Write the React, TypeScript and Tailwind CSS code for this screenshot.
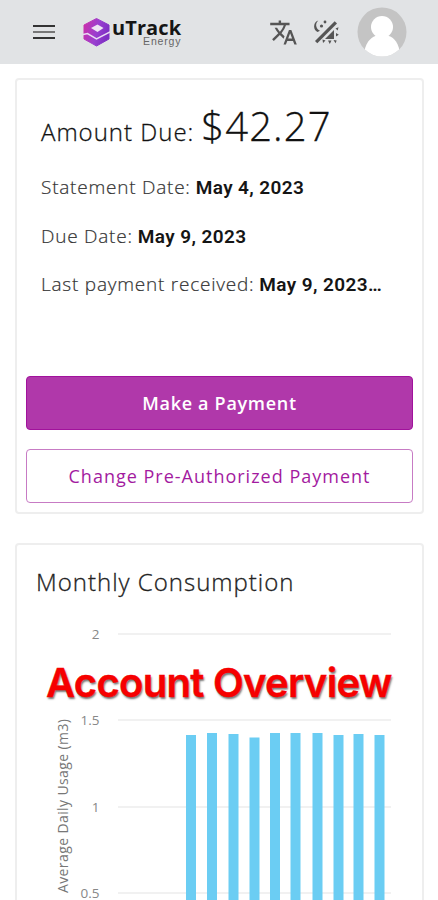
import React from 'react';
import { MdTranslate } from 'react-icons/md';

const details = [
  { label: 'Statement Date:', value: 'May 4, 2023' },
  { label: 'Due Date:', value: 'May 9, 2023' },
  { label: 'Last payment received:', value: 'May 9, 2023…' },
];

const ticks = [
  { label: '2', y: 34 },
  { label: '1.5', y: 120 },
  { label: '1', y: 207 },
  { label: '0.5', y: 293 },
];

const bars = [
  { x: 170.5, top: 135 },
  { x: 191.5, top: 133 },
  { x: 213, top: 134 },
  { x: 234, top: 137.5 },
  { x: 254.5, top: 133 },
  { x: 275, top: 133 },
  { x: 297, top: 133 },
  { x: 318, top: 135 },
  { x: 338, top: 134 },
  { x: 359, top: 135 },
];

function Logo() {
  return (
    <div className="flex items-center ml-[28px]">
      <svg width="27" height="30" viewBox="0 0 27 30">
        <defs>
          <linearGradient id="logo" x1="0" y1="0" x2="1" y2="0.3">
            <stop offset="0" stopColor="#cf2fa8" />
            <stop offset="0.6" stopColor="#9a3fd0" />
            <stop offset="1" stopColor="#7f2fc4" />
          </linearGradient>
        </defs>
        <path
          d="M13.500 1.500 26 8v14l-12.500 7L1 22V8Z"
          fill="url(#logo)"
          stroke="url(#logo)"
          strokeWidth="1"
          strokeLinejoin="round"
        />
        <path d="M8 11 14.500 7.500 20.500 11l-6 4Z" fill="#eee4f4" />
        <path d="M0 17.500 4.500 16.500 13.500 21.800 27 14.800" fill="none" stroke="#e9dcf3" strokeWidth="1.500" />
      </svg>
      <div className="flex flex-col items-end font-['Open_Sans',sans-serif]">
        <span className="text-[20px] leading-[18px] font-bold text-[#151515] tracking-[0.1px] ml-[2px]">uTrack</span>
        <span className="font-['Liberation_Sans',sans-serif] text-[10.5px] leading-[9px] text-[#666] tracking-[0.8px]">
          Energy
        </span>
      </div>
    </div>
  );
}

function DayNightIcon() {
  return (
    <svg width="27" height="27" viewBox="0 0 27 27" fill="#555">
      <path d="M6.300 1.500A6.300 6.300 0 0 0 5.500 13L8 11.700A6 6 0 0 1 6.300 1.500Z" />
      <path d="M22.700 2.300 25 4.600 5.300 24.300l-2.300-2.300Z" />
      <path d="M22 11V20h-9Z" />
      <circle cx="13" cy="3" r="1.400" />
      <circle cx="9.500" cy="7" r="1.600" />
      <path d="m23.500 9.500 3-1.300-.8 3.300ZM24 14l2.800 1.800-2.800 1.800ZM21.500 21l3.200.5-1.200 2.700ZM16 21.500h3.500L17.800 25ZM10.500 20.500l3 1-2.500 2.500Z" />
    </svg>
  );
}

function Avatar() {
  return (
    <svg width="50" height="50" viewBox="0 0 50 50">
      <defs>
        <clipPath id="avatar">
          <circle cx="25" cy="25" r="24.500" />
        </clipPath>
      </defs>
      <g clipPath="url(#avatar)">
        <rect width="50" height="50" fill="#c4c4c4" />
        <circle cx="25" cy="20" r="11" fill="#fff" />
        <path d="M7.500 44C9 34 16 29 20 28.500h10C35 29 41 34 42.500 44L36 50H14Z" fill="#fff" />
      </g>
    </svg>
  );
}

function Header() {
  return (
    <header className="flex items-center h-16 bg-[#e1e3e5] pl-[33px] pr-[31px]">
      <button className="flex flex-col gap-1 w-[22px]" aria-label="Open menu">
        <span className="h-[2px] w-full bg-[#333]" />
        <span className="h-[2px] w-full bg-[#777]" />
        <span className="h-[2px] w-full bg-[#333]" />
      </button>
      <Logo />
      <div className="flex items-center ml-auto">
        <MdTranslate className="w-[29px] h-[29px] text-[#555]" />
        <div className="ml-[14px] mr-[18px]">
          <DayNightIcon />
        </div>
        <Avatar />
      </div>
    </header>
  );
}

function AmountCard() {
  return (
    <section className="h-[436px] w-[409px] rounded-[4px] border-2 border-[#eeeeee] px-[9px] flex flex-col">
      <div className="flex items-baseline pl-[15px] pt-[18px] h-[93px] font-light text-[#111] whitespace-nowrap [-webkit-text-stroke:0.3px]">
        <span className="text-[24px] tracking-[1px]">Amount Due:</span>
        <span className="text-[40px] leading-[56px] ml-[7px] tracking-[1.1px]">$42.27</span>
      </div>
      {details.map((item) => (
        <div key={item.label} className="flex items-baseline h-[48.7px] pl-[15px] text-[19px] whitespace-nowrap">
          <span className="font-light text-[#333] tracking-[0.77px] [-webkit-text-stroke:0.2px]">{item.label}</span>
          <span className="font-['Roboto',sans-serif] font-semibold text-[#151515] ml-[5px] tracking-[0.4px]">{item.value}</span>
        </div>
      ))}
      <button className="mt-[56.9px] h-[54px] shrink-0 rounded-[4px] border border-[#a1129c] bg-[#b038aa] pt-[2px] text-white text-[18px] font-semibold tracking-[0.7px]">
        Make a Payment
      </button>
      <button className="mt-[19px] h-[54px] shrink-0 rounded-[4px] border border-[#c77bc4] pt-[2px] text-[#a31aa0] text-[18px] font-medium tracking-[1px]">
        Change Pre-Authorized Payment
      </button>
    </section>
  );
}

function ConsumptionCard() {
  return (
    <section className="relative mt-[29px] h-[400px] w-[409px] rounded-[4px] border-2 border-[#eeeeee]">
      <h2 className="h-[55px] pl-[19px] pt-[20px] text-[24px] leading-[33px] font-light text-[#222] tracking-[1px] [-webkit-text-stroke:0.3px]">
        Monthly Consumption
      </h2>
      <svg className="block" width="405" height="300" viewBox="1.500 0 405 300">
        {ticks.map((tick) => (
          <g key={tick.label}>
            <path d={`M102.500 ${tick.y}H375.500`} stroke="#ececec" strokeWidth="1.500" />
            <text x="84" y={tick.y + 4.500} textAnchor="end" fontSize="13.500" fill="#888">
              {tick.label}
            </text>
          </g>
        ))}
        {bars.map((bar) => (
          <rect key={bar.x} x={bar.x} y={bar.top} width="10" height={300 - bar.top} fill="#6bcdf3" />
        ))}
        <text transform="translate(52 293) rotate(-90)" fontSize="14" fill="#777" textLength="174">
          Average Daily Usage (m3)
        </text>
      </svg>
      <p className="absolute left-[29px] top-[114px] whitespace-nowrap font-['Inter',sans-serif] font-semibold text-[40px] leading-[48px] tracking-[-0.7px] text-[#f60000] [-webkit-text-stroke:0.4px_#f60000] [text-shadow:1px_2px_2px_#777]">
        Account Overview
      </p>
    </section>
  );
}

export default function App() {
  return (
    <div className="h-[900px] w-[438px] overflow-hidden bg-white font-['Open_Sans',sans-serif]">
      <Header />
      <main className="pt-[14px] pl-[15px]">
        <AmountCard />
        <ConsumptionCard />
      </main>
    </div>
  );
}
